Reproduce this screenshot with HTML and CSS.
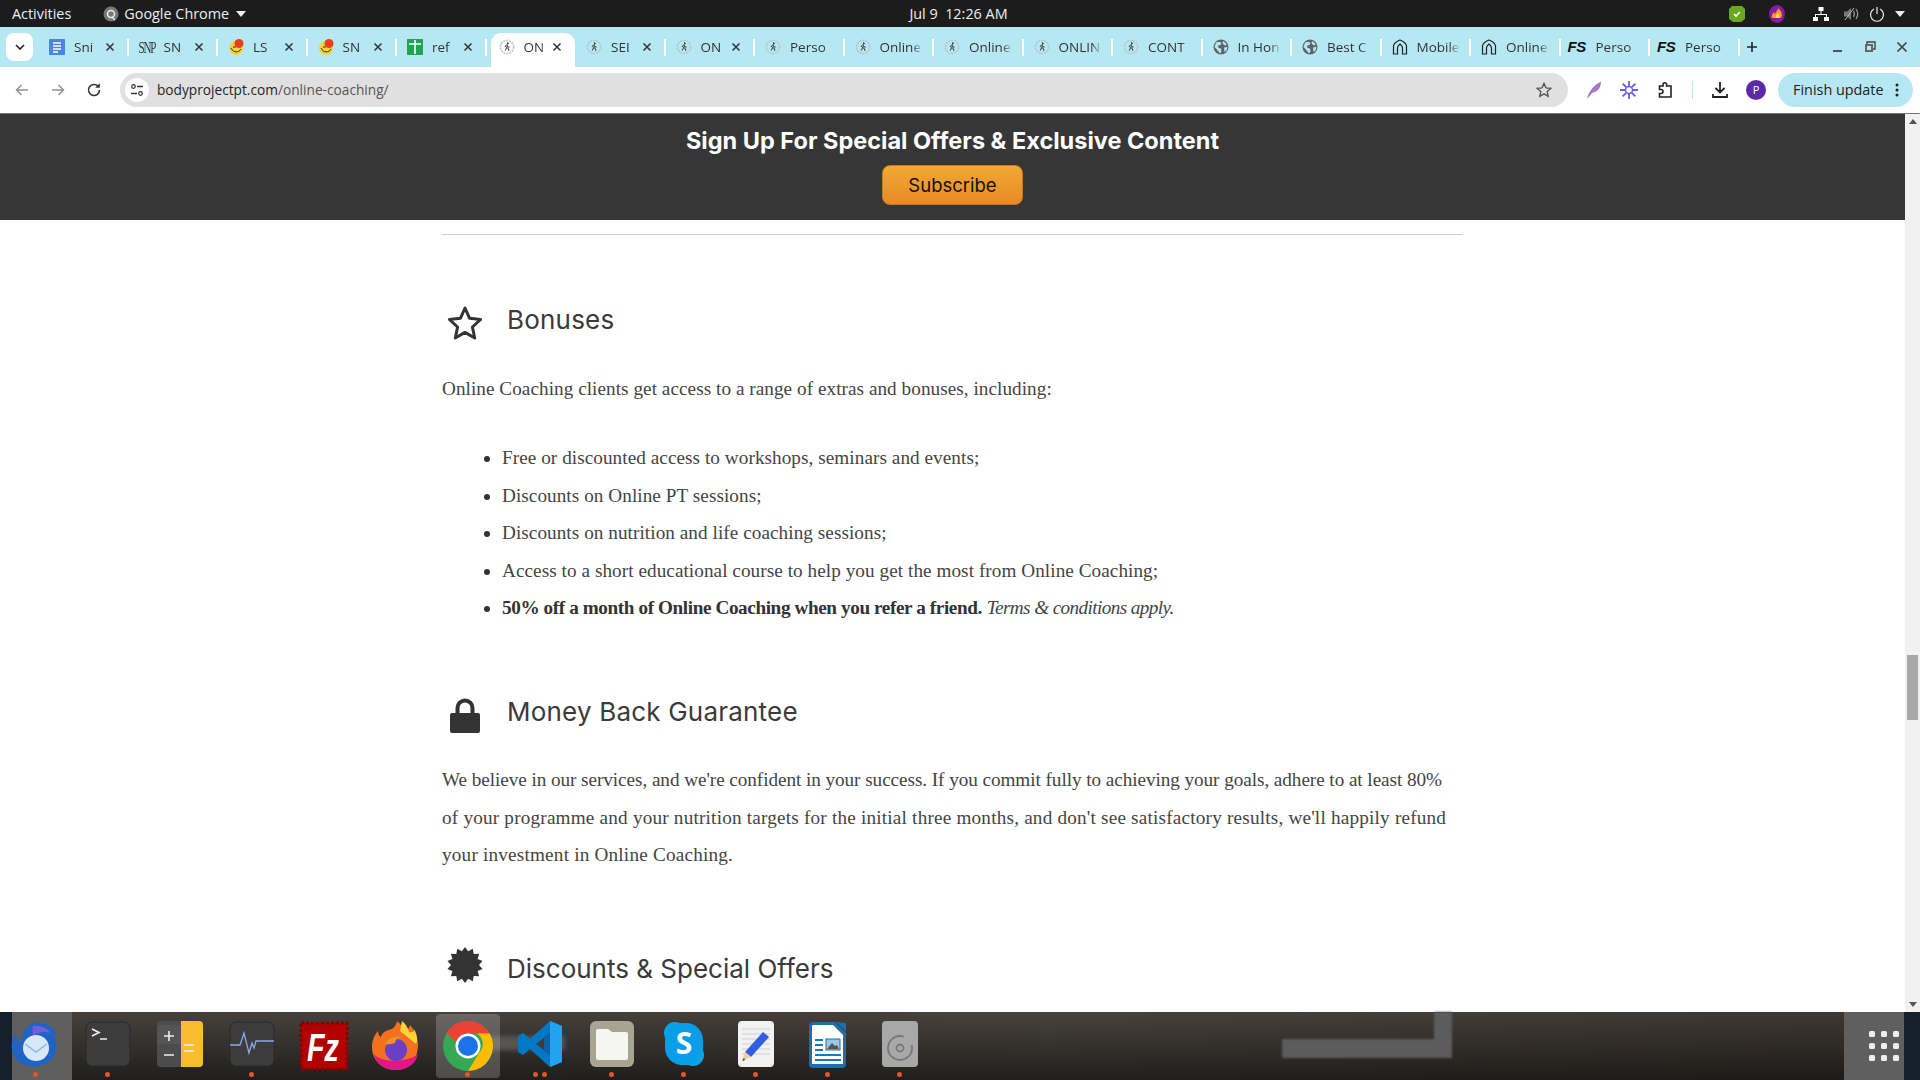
FILE: index.html
```html
<!DOCTYPE html>
<html lang="en">
<head>
    <meta charset="UTF-8">
    <title>Online Coaching - Body Project</title>
    <link rel="stylesheet" href="styles.css">
</head>
<body>
    <svg class="sprite" width="0" height="0">
        <symbol id="bp" viewBox="0 0 16 16">
            <circle cx="8" cy="8" r="6.6" fill="none" stroke="#b9c4c6" stroke-width="1.6" stroke-dasharray="2 1"/>
            <path d="M8.6 3.6l.9.8-.9.9zM8 5.5L6.2 7.4l1.6 1-1.6 3.2M8 6l1 2h1.6M7.8 8.6l1.8 1.2.2 2" fill="none" stroke="#333" stroke-width="1"/>
        </symbol>
        <symbol id="globe" viewBox="0 0 16 16">
            <circle cx="8" cy="8" r="7.5" fill="#5f6368"/>
            <path d="M3 3.5l3.5-.8 2 1.3-1 2-2.5.5.5 2.5 2.5.5.5 3-1.5 2L3.5 10 1.500 8zM10 2l3 2.2.5 2.3-2.5-.5-1.5-2zM11 8.5l3.500-.5-1 3.500-2 1.500z" fill="#b5e8f2"/>
        </symbol>
        <symbol id="arch" viewBox="0 0 16 16">
            <path d="M1.5 15V7C1.5 4 5 2.500 8 1c3 1.500 6.500 3 6.500 6v8h-4V9C10.500 7 9 6 8 5 7 6 5.500 7 5.500 9v6z" fill="none" stroke="#222" stroke-width="1.2"/>
        </symbol>
        <symbol id="close" viewBox="0 0 10 10">
            <path d="M1.5 1.5l7 7M8.5 1.5l-7 7" stroke="#333" stroke-width="1.5" fill="none"/>
        </symbol>
    </svg>

    <!-- gnome bar -->
    <div class="topbar">
        <div class="topbar-left">
            <span>Activities</span>
            <span class="app-menu">
                <svg width="16" height="16" viewBox="0 0 16 16"><circle cx="8" cy="8" r="7.5" fill="#777"/><circle cx="8" cy="8" r="3.5" fill="none" stroke="#eee" stroke-width="1.5"/><path d="M9 11l3 3" stroke="#eee" stroke-width="1.2"/></svg>
                Google Chrome
                <i class="caret"></i>
            </span>
        </div>
        <div class="clock">Jul 9&nbsp;&nbsp;12:26 AM</div>
        <div class="tray">
            <svg class="tray-shield" width="16" height="18" viewBox="0 0 16 18"><path d="M3 1h10l3 3v10l-4 3H4l-4-3V4z" fill="#6aa820"/><path d="M5 9l2 2 4-4" stroke="#fff" stroke-width="1.6" fill="none"/></svg>
            <svg class="tray-flame" width="16" height="18" viewBox="0 0 16 18"><ellipse cx="8" cy="9" rx="8" ry="9" fill="#8a1aa0"/><path d="M3 13c-1-3 1-4 2-6 0 1 1 1 1 2 1-2 2-4 4-6 0 2 1 2 2 3l1 4c0 2-1 3-2 3z" fill="#f59a22"/><path d="M7 13c-1-2 1-3 2-5 1 2 2 3 1 5z" fill="#ffd94a"/></svg>
            <svg class="tray-net" width="16" height="16" viewBox="0 0 16 16" fill="#fff"><rect x="5.5" y="1" width="5" height="4"/><rect x="0" y="11" width="5" height="4"/><rect x="11" y="11" width="5" height="4"/><path d="M7.5 5h1v3H14v3h-1V9H3v2H2V8h5.5z"/></svg>
            <svg class="tray-vol" width="16" height="16" viewBox="0 0 16 16"><path d="M1 5.500h3L8 2v12l-4-3.500H1z" fill="#777"/><path d="M10.500 5c1 2 1 4 0 6M13 3c2 3 2 7 0 10" stroke="#999" fill="none" stroke-width="1.3"/><path d="M2 14L11 2" stroke="#bbb"/></svg>
            <svg class="tray-power" width="16" height="16" viewBox="0 0 16 16"><path d="M5 3a6.500 6.500 0 1 0 6 0" stroke="#eee" fill="none" stroke-width="1.2"/><path d="M8 1v7" stroke="#eee" stroke-width="1.2"/></svg>
            <i class="caret"></i>
        </div>
    </div>

    <!-- tabs -->
    <div class="tabstrip">
        <button class="tab-list"><svg width="10" height="6" viewBox="0 0 10 6"><path d="M1 1l4 4 4-4" stroke="#222" stroke-width="1.6" fill="none"/></svg></button>
        <div class="tabs">
            <div class="tab"><svg class="fav" viewBox="0 0 16 16"><rect width="16" height="18" y="-1" rx="2" fill="#4a86e8"/><path d="M4 4h8M4 7h8M4 10h8M4 13h5" stroke="#fff" stroke-width="1.3"/></svg><span class="tab-title">Sni</span><svg class="tab-close"><use href="#close"/></svg></div>
            <div class="tab"><span class="fav fav-snp">SNP</span><span class="tab-title">SN</span><svg class="tab-close"><use href="#close"/></svg></div>
            <div class="tab"><svg class="fav" viewBox="0 0 16 16"><circle cx="8" cy="9" r="7" fill="#f5d23a"/><path d="M3 9c2 5 8 5 10 1M5 8h3" stroke="#333" fill="none"/><circle cx="11" cy="4.5" r="4.5" fill="#e8401c"/></svg><span class="tab-title">LS</span><svg class="tab-close"><use href="#close"/></svg></div>
            <div class="tab"><svg class="fav" viewBox="0 0 16 16"><circle cx="8" cy="9" r="7" fill="#f5d23a"/><path d="M3 9c2 5 8 5 10 1M5 8h3" stroke="#333" fill="none"/><circle cx="11" cy="4.5" r="4.5" fill="#e8401c"/></svg><span class="tab-title">SN</span><svg class="tab-close"><use href="#close"/></svg></div>
            <div class="tab"><svg class="fav" viewBox="0 0 16 16"><rect width="16" height="18" y="-1" rx="2" fill="#23a455"/><path d="M2 5h12M8 1v14" stroke="#fff" stroke-width="1.6"/></svg><span class="tab-title">ref</span><svg class="tab-close"><use href="#close"/></svg></div>
            <div class="tab tab-active"><svg class="fav"><use href="#bp"/></svg><span class="tab-title">ON</span><svg class="tab-close"><use href="#close"/></svg></div>
            <div class="tab"><svg class="fav"><use href="#bp"/></svg><span class="tab-title">SEI</span><svg class="tab-close"><use href="#close"/></svg></div>
            <div class="tab"><svg class="fav"><use href="#bp"/></svg><span class="tab-title">ON</span><svg class="tab-close"><use href="#close"/></svg></div>
            <div class="tab"><svg class="fav"><use href="#bp"/></svg><span class="tab-title">Perso</span></div>
            <div class="tab"><svg class="fav"><use href="#bp"/></svg><span class="tab-title">Online</span></div>
            <div class="tab"><svg class="fav"><use href="#bp"/></svg><span class="tab-title">Online</span></div>
            <div class="tab"><svg class="fav"><use href="#bp"/></svg><span class="tab-title">ONLIN</span></div>
            <div class="tab"><svg class="fav"><use href="#bp"/></svg><span class="tab-title">CONT</span></div>
            <div class="tab"><svg class="fav"><use href="#globe"/></svg><span class="tab-title">In Hon</span></div>
            <div class="tab"><svg class="fav"><use href="#globe"/></svg><span class="tab-title">Best C</span></div>
            <div class="tab"><svg class="fav"><use href="#arch"/></svg><span class="tab-title">Mobile</span></div>
            <div class="tab"><svg class="fav"><use href="#arch"/></svg><span class="tab-title">Online</span></div>
            <div class="tab"><span class="fav fav-fs">FS</span><span class="tab-title">Perso</span></div>
            <div class="tab"><span class="fav fav-fs">FS</span><span class="tab-title">Perso</span></div>
        </div>
        <svg class="new-tab" width="12" height="12" viewBox="0 0 12 12"><path d="M6 1v10M1 6h10" stroke="#222" stroke-width="1.6"/></svg>
        <div class="win-controls">
            <svg width="12" height="12" viewBox="0 0 12 12"><path d="M1 10h9" stroke="#444" stroke-width="1.8"/></svg>
            <svg width="12" height="12" viewBox="0 0 12 12"><path d="M3 3V1h8v7H9" stroke="#444" fill="none" stroke-width="1.4"/><rect x="1" y="3" width="8" height="8" fill="#666"/><rect x="3" y="5" width="4" height="4" fill="#b5e8f2"/></svg>
            <svg width="12" height="12" viewBox="0 0 12 12"><path d="M1.5 1.5l9 9M10.5 1.5l-9 9" stroke="#444" stroke-width="1.7"/></svg>
        </div>
    </div>

    <!-- toolbar -->
    <div class="toolbar">
        <div class="nav-btns">
            <svg width="16" height="16" viewBox="0 0 16 16"><path d="M14 8H3M7.5 3L2.5 8l5 5" stroke="#8f9396" stroke-width="1.5" fill="none"/></svg>
            <svg width="16" height="16" viewBox="0 0 16 16"><path d="M2 8h11M8.5 3l5 5-5 5" stroke="#8f9396" stroke-width="1.5" fill="none"/></svg>
            <svg width="16" height="16" viewBox="0 0 16 16"><path d="M13.5 8a5.500 5.500 0 1 1-1.600-3.900" stroke="#333" stroke-width="1.6" fill="none"/><path d="M13.8 1.200v4.600H9.200z" fill="#333"/></svg>
        </div>
        <div class="omnibox">
            <span class="site-info"><svg width="14" height="14" viewBox="0 0 14 14"><circle cx="3.5" cy="3.5" r="1.8" fill="none" stroke="#333" stroke-width="1.2"/><circle cx="10.5" cy="10.5" r="1.8" fill="none" stroke="#333" stroke-width="1.2"/><path d="M7 3.500h6M1 10.500h6" stroke="#333" stroke-width="1.3"/></svg></span>
            <span class="url">bodyprojectpt.com<span class="url-path">/online-coaching/</span></span>
            <svg class="bookmark" width="16" height="16" viewBox="0 0 16 16"><path d="M8 1.500l2 4.400 4.700.5-3.500 3.200 1 4.700L8 11.900l-4.200 2.400 1-4.700L1.300 6.400 6 5.900z" fill="none" stroke="#555" stroke-width="1.4"/></svg>
        </div>
        <div class="ext-btns">
            <svg width="16" height="18" viewBox="0 0 16 18"><path d="M1 17.500C3 10 8 4 15 .500c0 6-3 10-9 11.500-1 1.500-3 4-5 5.500z" fill="#a678c8"/></svg>
            <svg width="18" height="18" viewBox="0 0 18 18"><circle cx="9" cy="9" r="3.500" fill="none" stroke="#6a5cf0" stroke-width="1.6"/><path d="M9 0v5M9 13v5M0 9h5M13 9h5M2.600 2.600l3.600 3.600M11.800 11.800l3.600 3.600M15.400 2.600l-3.600 3.600M6.200 11.800l-3.600 3.600" stroke="#6a5cf0" stroke-width="1.8"/></svg>
            <svg width="18" height="18" viewBox="0 0 18 18"><path d="M3.500 5H7V3.500a1.800 1.800 0 0 1 3.600 0V5H15v11H3.500v-3.500H5a2 2 0 0 0 0-4H3.500z" fill="none" stroke="#222" stroke-width="1.6"/></svg>
            <i class="toolbar-sep"></i>
            <svg width="18" height="18" viewBox="0 0 18 18"><path d="M9 1v10M4.500 7L9 11.500 13.500 7" stroke="#222" stroke-width="1.8" fill="none"/><path d="M2 13v3h14v-3" stroke="#222" stroke-width="1.8" fill="none"/></svg>
            <span class="avatar">P</span>
        </div>
        <button class="finish-update">Finish update<svg width="4" height="14" viewBox="0 0 4 14" fill="#222"><circle cx="2" cy="2" r="1.5"/><circle cx="2" cy="7" r="1.5"/><circle cx="2" cy="12" r="1.5"/></svg></button>
    </div>

    <!-- page -->
    <div class="viewport">
        <main class="page">
            <div class="signup">
                <h3>Sign Up For Special Offers &amp; Exclusive Content</h3>
                <a class="subscribe">Subscribe</a>
            </div>
            <div class="content">
                <hr>
                <section class="block block-bonuses">
                    <h2>
                        <svg class="block-icon" viewBox="0 0 36 36"><path d="M18 3l4.600 10.300 11 1.200-8.200 7.500 2.300 11L18 27.400 8.300 33l2.300-11-8.200-7.500 11-1.200z" fill="none" stroke="#333" stroke-width="3" stroke-linejoin="round"/></svg>
                        Bonuses
                    </h2>
                    <p>Online Coaching clients get access to a range of extras and bonuses, including:</p>
                    <ul>
                        <li>Free or discounted access to workshops, seminars and events;</li>
                        <li>Discounts on Online PT sessions;</li>
                        <li>Discounts on nutrition and life coaching sessions;</li>
                        <li>Access to a short educational course to help you get the most from Online Coaching;</li>
                        <li><b>50% off a month of Online Coaching when you refer a friend.</b> <em>Terms &amp; conditions apply.</em></li>
                    </ul>
                </section>
                <section class="block block-money">
                    <h2>
                        <svg class="block-icon" viewBox="0 0 36 36"><path d="M10.500 18v-7a7.500 7.500 0 0 1 15 0v7" fill="none" stroke="#333" stroke-width="4"/><rect x="3" y="16" width="30" height="20" rx="2" fill="#333"/></svg>
                        Money Back Guarantee
                    </h2>
                    <p><span class="tight-line">We believe in our services, and we're confident in your success. If you commit fully to achieving your goals, adhere to at least 80%</span><br>of your programme and your nutrition targets for the initial three months, and don't see satisfactory results, we'll happily refund<br>your investment in Online Coaching.</p>
                </section>
                <section class="block block-discounts">
                    <h2>
                        <svg class="block-icon" viewBox="0 0 36 36"><polygon points="18,0 21.1,4.350 25.800,1.780 26.700,7.050 32.100,6.780 30.600,11.900 35.500,14 32,18 35.500,22 30.600,24.100 32.100,29.200 26.700,28.950 25.800,34.200 21.100,31.650 18,36 14.900,31.650 10.200,34.200 9.300,28.950 3.900,29.200 5.400,24.100 .5,22 4,18 .5,14 5.400,11.900 3.900,6.780 9.300,7.050 10.200,1.780 14.900,4.350" fill="#333"/></svg>
                        Discounts &amp; Special Offers
                    </h2>
                </section>
            </div>
        </main>
        <div class="scrollbar">
            <i class="arrow-up"></i>
            <i class="thumb"></i>
            <i class="arrow-down"></i>
        </div>
    </div>

    <!-- dock -->
    <div class="dock">
        <div class="wallpaper-frame"></div>
        <div class="wallpaper-band"></div>
        <div class="dock-item dock-item-open">
            <svg class="dock-bird" width="50" height="50" viewBox="0 0 50 50"><path d="M22 2c10-2 22 4 24 12l-4-1c5 7 5 18-1 25-8 9-26 10-35 1C-2 31 0 18 5 11c0 6 2 9 5 11 0-8 5-17 12-20z" fill="#1f63c4"/><path d="M22 5c8-1 14 2 18 7-7-2-13-1-17 3-2-4-2-7-1-10z" fill="#6f5fd8"/><circle cx="25" cy="27" r="13" fill="#d8e8f8"/><path d="M14 23l11 8 11-8" stroke="#8fb8e8" fill="none" stroke-width="1.5"/></svg>
            <i class="dot dot-bird"></i>
        </div>
        <div class="dock-item">
            <svg width="46" height="46" viewBox="0 0 46 46"><rect x="1" y="1" width="44" height="44" rx="6" fill="#3c3c3c" stroke="#2a2a2a"/><path d="M7 8l7 3.500L7 15M15 18h7" stroke="#eee" stroke-width="1.7" fill="none"/></svg>
            <i class="dot"></i>
        </div>
        <div class="dock-item">
            <svg width="46" height="46" viewBox="0 0 46 46"><rect width="46" height="46" rx="4" fill="#4c4c4c"/><path d="M24 0h18a4 4 0 0 1 4 4v38a4 4 0 0 1-4 4H24z" fill="#fbbc2e"/><path d="M0 23h24V4H4a4 4 0 0 0-4 4z" fill="#555"/><path d="M7 15h10M12 10v10M7 34h10M27 24h10M27 30h10" stroke="#eee" stroke-width="1.6"/></svg>
        </div>
        <div class="dock-item">
            <svg width="46" height="46" viewBox="0 0 46 46"><rect x="1" y="1" width="44" height="44" rx="6" fill="#3c3c3c" stroke="#2a2a2a"/><path d="M1 24h10l4-12 5 20 3-10 2 5 2-7h18" stroke="#8aa8e8" fill="none" stroke-width="1.3"/></svg>
            <i class="dot"></i>
        </div>
        <div class="dock-item">
            <svg width="50" height="50" viewBox="0 0 50 50"><rect x="2" y="2" width="46" height="46" fill="#b30000" stroke="#8a0000" stroke-width="3" stroke-dasharray="3 2"/><text x="8" y="40" class="fz-text" textLength="32" lengthAdjust="spacingAndGlyphs">Fz</text></svg>
        </div>
        <div class="dock-item">
            <svg width="48" height="50" viewBox="0 0 48 50"><path d="M24 49C10 49 0 39 0 26 0 19 3 13 6 10c0 3 1 5 3 6 1-5 6-7 11-8 3-2 5-6 5-8 4 3 5 6 6 9 6 0 8-4 6-6 5 5 9 12 9 21 0 14-9 25-22 25z" fill="#f2711f"/><path d="M24 49c-11 0-20-6-22-16 6 9 34 9 44 0-2 10-11 16-22 16z" fill="#e31587"/><path d="M30 0c4 3 6 7 7 11 4 1 6-1 5-3 3 5 4 11 2 15L28 10z" fill="#ffd23a"/><circle cx="24" cy="29" r="11" fill="#6a3fc4"/><path d="M13 23c3-6 10-9 16-7-3 1-6 3-6 6-3 1-7 2-10 1z" fill="#f79020"/></svg>
        </div>
        <div class="dock-item dock-item-focus">
            <svg width="50" height="50" viewBox="0 0 50 50"><circle cx="25" cy="25" r="25" fill="#34a853"/><path d="M25 0a25 25 0 0 1 21.700 12.500H25a12.500 12.500 0 0 0-12 9L3.500 12A25 25 0 0 1 25 0z" fill="#ea4335"/><path d="M46.700 12.500A25 25 0 0 1 25 50l11-18a12.500 12.500 0 0 0-2-19.500z" fill="#fbbc05"/><circle cx="25" cy="25" r="12.500" fill="#fff"/><circle cx="25" cy="25" r="10" fill="#1a73e8"/></svg>
            <i class="dot"></i>
        </div>
        <div class="dock-item">
            <svg width="44" height="46" viewBox="0 0 44 46"><path d="M32 0l12 5v36l-12 5L12 28l-7 6-5-3v-16l5-3 7 6z" fill="#0078c8"/><path d="M32 0l12 5v36l-12 5z" fill="#22a3ee"/><path d="M32 12L18 23l14 11z" fill="#3c3c3c"/><path d="M32 12v22l-6-5V17z" fill="#0f62a8"/></svg>
            <i class="dot-pair"><i class="dot"></i><i class="dot"></i></i>
        </div>
        <div class="dock-item">
            <svg width="44" height="46" viewBox="0 0 44 46"><rect width="44" height="46" rx="6" fill="#a9a392"/><path d="M6 14V10a2 2 0 0 1 2-2h10l4 3h14a2 2 0 0 1 2 2v24a2 2 0 0 1-2 2H8a2 2 0 0 1-2-2z" fill="#f5f5f1"/></svg>
            <i class="dot"></i>
        </div>
        <div class="dock-item">
            <svg width="42" height="46" viewBox="0 0 42 46"><circle cx="12" cy="12" r="11" fill="#04a7e6"/><circle cx="30" cy="34" r="11" fill="#04a7e6"/><rect x="2" y="2" width="38" height="42" rx="17" fill="#0a9ee8"/><text x="21" y="33" class="skype-text">S</text></svg>
            <i class="dot"></i>
        </div>
        <div class="dock-item">
            <svg width="36" height="46" viewBox="0 0 36 46"><rect width="36" height="46" rx="4" fill="#f2f2f2"/><path d="M4 8h28M4 13h28M4 18h28M4 23h28M4 28h28M4 33h28" stroke="#cfcfcf"/><path d="M25 11l6 5-18 20-6-5z" fill="#2f5fe0"/><path d="M7 31l6 5-9 4z" fill="#f2cfa5"/><path d="M6 37l-2 3 3-1z" fill="#333"/></svg>
            <i class="dot"></i>
        </div>
        <div class="dock-item">
            <svg width="38" height="48" viewBox="0 0 38 48"><path d="M4 1h22l11 11v31a4 4 0 0 1-4 4H4a4 4 0 0 1-4-4V5a4 4 0 0 1 4-4z" fill="#1c6fa8"/><path d="M4 4h20l10 10v29H3V5z" fill="#fff"/><path d="M27 1l10 1v9z" fill="#1c6fa8"/><rect x="17" y="18" width="14" height="11" fill="#9cc8e8" stroke="#1c6fa8"/><path d="M18 28l5-6 3 3 2-1 2 4z" fill="#555"/><path d="M6 19h8M6 24h8M6 29h8M6 34h26M6 39h26" stroke="#1a78c2" stroke-width="2"/></svg>
            <i class="dot"></i>
        </div>
        <div class="dock-item">
            <svg width="36" height="46" viewBox="0 0 36 46"><rect width="36" height="46" rx="4" fill="#a8a8a8"/><circle cx="18" cy="27" r="12" fill="none" stroke="#777" stroke-width="1.8" stroke-dasharray="60 12"/><circle cx="18" cy="27" r="3.5" fill="none" stroke="#777" stroke-width="1.8"/></svg>
            <i class="dot"></i>
        </div>
        <div class="app-grid">
            <svg width="30" height="30" viewBox="0 0 30 30" fill="#eee"><rect x="0" y="0" width="6" height="6" rx="1.5"/><rect x="12" y="0" width="6" height="6" rx="1.5"/><rect x="24" y="0" width="6" height="6" rx="1.5"/><rect x="0" y="12" width="6" height="6" rx="1.5"/><rect x="12" y="12" width="6" height="6" rx="1.5"/><rect x="24" y="12" width="6" height="6" rx="1.5"/><rect x="0" y="24" width="6" height="6" rx="1.5"/><rect x="12" y="24" width="6" height="6" rx="1.5"/><rect x="24" y="24" width="6" height="6" rx="1.5"/></svg>
        </div>
    </div>
</body>
</html>
```

FILE: styles.css
```css
* {
    box-sizing: border-box;
}

html, body {
    margin: 0;
    padding: 0;
}

body {
    width: 1920px;
    height: 1080px;
    overflow: hidden;
    display: flex;
    flex-direction: column;
    font-family: "Open Sans", "Noto Sans", sans-serif;
    background: #fff;
}

.sprite {
    position: absolute;
}

button {
    border: none;
    font: inherit;
    padding: 0;
}

/* gnome bar */
.topbar {
    height: 27px;
    background: #1c1c1c;
    color: #eee;
    font-size: 14.4px;
    display: flex;
    align-items: center;
    padding: 0 15px 0 12px;
    flex: none;
}

.topbar-left {
    flex: 1;
    display: flex;
    align-items: center;
    gap: 32px;
}

.app-menu {
    display: flex;
    align-items: center;
    gap: 5px;
}

.caret {
    display: inline-block;
    border-left: 5px solid transparent;
    border-right: 5px solid transparent;
    border-top: 6px solid #eee;
    margin-left: 2px;
}

.tray {
    flex: 1;
    display: flex;
    align-items: center;
    justify-content: flex-end;
}

.tray-shield { margin-right: 24px; }
.tray-flame { margin-right: 28px; }
.tray-net { margin-right: 14px; }
.tray-vol { margin-right: 10px; }
.tray-power { margin-right: 8px; }

/* tabs */
.tabstrip {
    height: 40px;
    background: #b5e8f2;
    display: flex;
    align-items: flex-end;
    padding-left: 6px;
    flex: none;
}

.tab-list {
    width: 27px;
    height: 28px;
    margin-bottom: 6px;
    background: #fff;
    border-radius: 8px;
    display: flex;
    align-items: center;
    justify-content: center;
}

.tabs {
    display: flex;
    margin-left: 5px;
}

.tab {
    width: 89.5px;
    height: 34px;
    display: flex;
    align-items: center;
    padding: 0 10px 7px 11px;
    font-size: 13.5px;
    color: #333;
    position: relative;
}

.tab::after {
    content: "";
    position: absolute;
    right: -1px;
    top: 6px;
    width: 2px;
    height: 17px;
    background: #fff;
}

.tab-active {
    background: #fff;
    border-radius: 10px 10px 0 0;
    margin-left: 5px;
    width: 84.5px;
    padding-left: 8px;
}

.tab-active::after {
    display: none;
}

.fav {
    width: 16px;
    height: 16px;
    flex: none;
}

.fav-snp {
    font-family: "Liberation Serif", serif;
    font-size: 11px;
    letter-spacing: -1.2px;
    line-height: 16px;
    color: #333;
    white-space: nowrap;
    transform: scaleY(1.6);
}

.fav-fs {
    font-family: "Liberation Sans", sans-serif;
    font-weight: 700;
    font-style: italic;
    font-size: 15px;
    line-height: 16px;
    color: #111;
    letter-spacing: -0.5px;
    margin-left: -3px;
    margin-right: 3px;
}

.tab-title {
    flex: 1;
    min-width: 0;
    margin-left: 9px;
    white-space: nowrap;
    overflow: hidden;
    -webkit-mask-image: linear-gradient(90deg, #000 75%, transparent);
    mask-image: linear-gradient(90deg, #000 75%, transparent);
}

.tab-close {
    width: 10px;
    height: 10px;
    flex: none;
    margin: 0 3px 0 5px;
}

.new-tab {
    margin: 0 0 14px 7px;
}

.win-controls {
    margin-left: auto;
    display: flex;
    gap: 20px;
    padding-right: 12px;
    margin-bottom: 14px;
}

/* toolbar */
.toolbar {
    height: 47px;
    background: #fff;
    border-bottom: 1px solid #777;
    display: flex;
    align-items: center;
    padding: 0 7px 1px 14px;
    flex: none;
}

.nav-btns {
    display: flex;
    gap: 20px;
    width: 106px;
}

.omnibox {
    width: 1448px;
    height: 34px;
    background: #e0e0e0;
    border-radius: 17px;
    display: flex;
    align-items: center;
    padding: 0 16px 0 5px;
}

.site-info {
    width: 24px;
    height: 24px;
    border-radius: 50%;
    background: #fff;
    display: flex;
    align-items: center;
    justify-content: center;
}

.url {
    margin-left: 8px;
    font-size: 13.7px;
    color: #1f1f1f;
}

.url-path {
    color: #555;
}

.bookmark {
    margin-left: auto;
}

.ext-btns {
    display: flex;
    align-items: center;
    width: 210px;
    padding-left: 18px;
}

.ext-btns svg {
    flex: none;
    margin-right: 18px;
}

.toolbar-sep {
    width: 1px;
    height: 18px;
    background: #b5e8f2;
    margin-right: 18px;
}

.avatar {
    width: 20px;
    height: 20px;
    margin-left: -1px;
    border-radius: 50%;
    background: #5b2aa8;
    color: #fff;
    font-size: 11px;
    display: flex;
    align-items: center;
    justify-content: center;
}

.finish-update {
    width: 135px;
    height: 34px;
    border-radius: 17px;
    background: #b5e8f2;
    color: #222;
    font-size: 14.4px;
    display: flex;
    align-items: center;
    justify-content: space-between;
    padding: 0 14px 0 15px;
    white-space: nowrap;
}

/* page */
.viewport {
    flex: 1;
    min-height: 0;
    display: flex;
}

.page {
    flex: 1;
    overflow: hidden;
}

.signup {
    height: 106px;
    background: #363636;
    display: flex;
    flex-direction: column;
    align-items: center;
    padding-top: 13px;
}

.signup h3 {
    margin: 0 0 10px;
    color: #fff;
    font-family: Inter, "Open Sans", sans-serif;
    font-size: 23.5px;
    line-height: 28px;
    font-weight: 700;
}

.subscribe {
    width: 141px;
    height: 40px;
    border-radius: 8px;
    border: 1px solid #c9781c;
    background: linear-gradient(#f0a935, #e88a25);
    color: #111;
    font-family: Inter, "Open Sans", sans-serif;
    font-size: 18.5px;
    display: flex;
    align-items: center;
    justify-content: center;
}

.content {
    width: 1021px;
    margin: 14px auto 0;
    color: #444;
    font-family: "Liberation Serif", serif;
    font-size: 19.2px;
    line-height: 37.4px;
}

.content hr {
    margin: 0;
    border: none;
    border-top: 1px solid #ccc;
}

.block h2 {
    margin: 0;
    display: flex;
    align-items: center;
    gap: 24px;
    padding-left: 5px;
    font-family: Inter, "Open Sans", sans-serif;
    font-size: 26px;
    letter-spacing: 0.2px;
    font-weight: 400;
    line-height: 36px;
    color: #3a3a3a;
}

.block-icon {
    width: 36px;
    height: 36px;
    flex: none;
    margin-top: 6px;
}

.block p {
    margin: 0;
}

.block ul {
    margin: 0;
    padding-left: 60px;
}

.block li {
    letter-spacing: 0.06px;
}

.block li::marker {
    color: #333;
}

.block b {
    color: #333;
    letter-spacing: -0.4px;
}

.block em {
    letter-spacing: -0.6px;
}

.block-bonuses {
    padding-top: 64px;
}

.block-bonuses p {
    margin: 29px 0 32px;
    letter-spacing: 0.05px;
}

.block-money {
    padding-top: 65px;
}

.block-money p {
    margin-top: 28px;
    letter-spacing: 0.2px;
}

.block-money .tight-line {
    letter-spacing: -0.06px;
}

.block-discounts {
    padding-top: 73px;
}

.block-discounts h2 {
    letter-spacing: 0;
}

.block-discounts .block-icon {
    margin-top: 0;
    margin-bottom: 9px;
}

/* scrollbar */
.scrollbar {
    width: 15px;
    background: #f1f1f1;
    display: flex;
    flex-direction: column;
    align-items: center;
    padding: 5px 0;
}

.arrow-up {
    border-left: 4px solid transparent;
    border-right: 4px solid transparent;
    border-bottom: 5px solid #555;
}

.thumb {
    width: 11px;
    height: 65px;
    background: #a8a8a8;
    margin-top: 531px;
}

.arrow-down {
    margin-top: auto;
    border-left: 4px solid transparent;
    border-right: 4px solid transparent;
    border-top: 5px solid #555;
}

/* dock */
.dock {
    height: 68px;
    flex: none;
    position: relative;
    display: flex;
    background:
        linear-gradient(90deg, #16202c 0, #16202c 12px, transparent 12px),
        linear-gradient(90deg, transparent 1904px, #16202c 1904px),
        linear-gradient(180deg, rgba(80, 70, 62, 0.55), rgba(25, 24, 22, 0.8)),
        linear-gradient(90deg, #3a3a3a 0, #3a3a3a 500px, #3a3633 700px, #3f3f3c 1050px, #33302b 1500px, #2a2724 1840px);
}

.wallpaper-frame {
    position: absolute;
    left: 1282px;
    top: 0;
    width: 170px;
    height: 46px;
    border-right: 18px solid #5c5c5c;
    border-bottom: 19px solid #5c5c5c;
    filter: blur(1px);
}

.wallpaper-band {
    position: absolute;
    left: 465px;
    top: 24px;
    width: 100px;
    height: 14px;
    background: #555;
    filter: blur(2px);
}

.dock-item {
    width: 72px;
    height: 68px;
    flex: none;
    display: flex;
    flex-direction: column;
    align-items: center;
    padding-top: 9px;
    position: relative;
}

.dock-item-open {
    background: #5f5f5f;
    width: 60px;
    margin-left: 12px;
}

.dock-bird {
    margin-right: 12px;
}

.dock-item-focus::before {
    content: "";
    position: absolute;
    left: 4px;
    top: 2px;
    width: 64px;
    height: 64px;
    border-radius: 4px;
    background: rgba(255, 255, 255, 0.2);
}

.dock-item svg {
    position: relative;
}

.dot {
    width: 5px;
    height: 5px;
    border-radius: 50%;
    background: #e95420;
    position: absolute;
    bottom: 3px;
    left: 50%;
    margin-left: -3px;
}

.dot-bird {
    left: 24px;
}

.dot-pair {
    position: absolute;
    bottom: 3px;
    left: 50%;
    width: 14px;
    margin-left: -7px;
    height: 5px;
    display: flex;
    justify-content: space-between;
}

.dot-pair .dot {
    position: static;
    margin: 0;
}

.fz-text {
    font-family: "Liberation Sans", sans-serif;
    font-weight: 700;
    font-style: italic;
    font-size: 38px;
    fill: #fff;
}

.skype-text {
    font-family: "Open Sans", sans-serif;
    font-weight: 700;
    font-size: 30px;
    fill: #fff;
    text-anchor: middle;
}

.app-grid {
    position: absolute;
    left: 1844px;
    top: 0;
    width: 60px;
    height: 68px;
    padding-right: 5px;
    background: #5f5f5f;
    display: flex;
    align-items: center;
    justify-content: flex-end;
}
```
